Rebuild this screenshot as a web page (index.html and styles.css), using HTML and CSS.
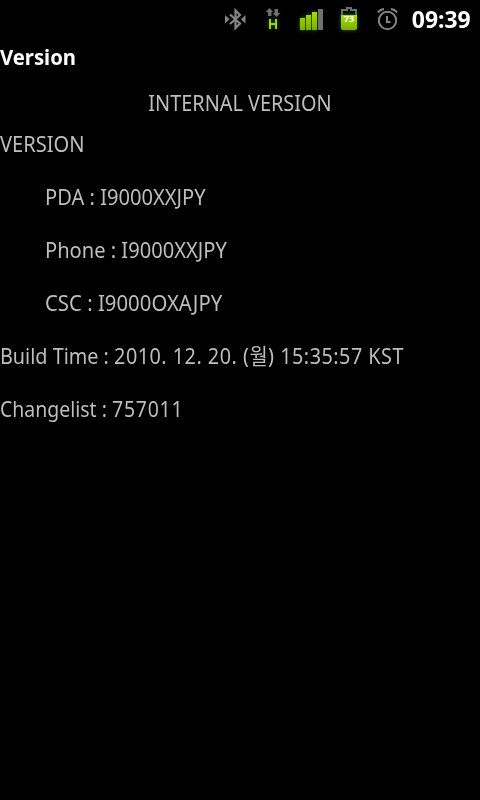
FILE: index.html
```html
<!DOCTYPE html>
<html lang="en">
<head>
  <meta charset="UTF-8">
  <meta name="viewport" content="width=device-width, initial-scale=1.0">
  <title>Version</title>
  <link rel="stylesheet" href="styles.css">
</head>
<body>
  <header class="status-bar">
    <!-- bluetooth -->
    <svg class="icon bluetooth" width="22" height="24" viewBox="0 0 22 24">
      <path d="M5 6.5L15 15.5L10.5 20V2.5L15 7L5 16" fill="none" stroke="#858585" stroke-width="2.2"/>
      <path d="M0 7L4.5 11.2L0 15.5ZM20.5 7L16 11.2L20.5 15.5Z" fill="#858585"/>
    </svg>
    <!-- data connection -->
    <svg class="icon data" width="16" height="24" viewBox="0 0 16 24">
      <path d="M3.5 0L7.2 4H5.5V8H2V4H-0.5ZM8.5 1H12V5H14.5L10.5 9L6.8 5H8.5Z" fill="#707070"/>
      <path class="glow" d="M4 11V21M10 11V21M4 16H10" fill="none" stroke="#9bdc00" stroke-width="2"/>
    </svg>
    <!-- signal -->
    <svg class="icon signal" width="23" height="22" viewBox="0 0 23 22">
      <defs>
        <linearGradient id="green" x1="0" y1="0" x2="0" y2="1">
          <stop offset="0" stop-color="#a5e000"/>
          <stop offset="1" stop-color="#79ae00"/>
        </linearGradient>
      </defs>
      <path class="glow" d="M0 9H5V21H0ZM6 6H11V21H6ZM12 3H17V21H12Z" fill="url(#green)"/>
      <path d="M18 0H23V21H18Z" fill="#707070"/>
    </svg>
    <div class="battery">
      <svg width="16" height="24" viewBox="0 0 16 24">
        <path d="M1 9V3H6V1H10V3H15V9" fill="none" stroke="#707070" stroke-width="2"/>
        <path class="glow" d="M0 8H16V21Q16 23 14 23H2Q0 23 0 21Z" fill="url(#green)"/>
      </svg>
      <span class="level">73</span>
    </div>
    <!-- alarm -->
    <svg class="icon alarm" width="22" height="24" viewBox="0 0 22 24">
      <circle cx="10.5" cy="13.5" r="8.7" fill="none" stroke="#858585" stroke-width="2"/>
      <path d="M10 9V15H13.5" fill="none" stroke="#858585" stroke-width="2"/>
      <path d="M1 5.5Q3 2.5 7 2M20 5.5Q18 2.5 14 2" fill="none" stroke="#858585" stroke-width="2"/>
    </svg>
    <span class="clock">09:39</span>
  </header>

  <h1 class="title">Version</h1>

  <main class="content">
    <p class="heading">INTERNAL VERSION</p>
    <p class="line">VERSION</p>
    <p class="line indent">PDA : I9000XXJPY</p>
    <p class="line indent">Phone : I9000XXJPY</p>
    <p class="line indent csc">CSC : I9000OXAJPY</p>
    <p class="line build">Build Time : <span class="value">2010. 12. 20. (월) 15:35:57 KST</span></p>
    <p class="line changelist">Changelist : <span class="value">757011</span></p>
  </main>
</body>
</html>
```

FILE: styles.css
```css
body {
  margin: 0;
  height: 800px;
  overflow: hidden;
  background-color: #000;
  color: #bebebe;
  font-family: "Noto Sans", "Noto Sans CJK KR", sans-serif;
}

.status-bar {
  display: flex;
  height: 38px;
  padding: 0 9px 0 225px;
}

.status-bar svg {
  display: block;
  flex: none;
  overflow: visible;
}

.glow {
  filter: drop-shadow(0 0 2px #3c6400);
}

.bluetooth {
  margin-top: 8px;
}

.data {
  margin: 8px 0 0 19px;
}

.signal {
  margin: 9px 0 0 18px;
}

.battery {
  position: relative;
  margin: 7px 0 0 18px;
}

.level {
  position: absolute;
  top: 7px;
  left: 0;
  width: 16px;
  text-align: center;
  font-size: 9px;
  line-height: 10px;
  font-weight: bold;
  color: #fff;
}

.alarm {
  margin: 7px 0 0 20px;
}

.clock {
  margin-left: auto;
  font-size: 24px;
  line-height: 38px;
  font-weight: bold;
  color: #fff;
  transform: scaleX(0.955);
  transform-origin: right;
}

.title {
  margin: 0;
  height: 38px;
  font-size: 21px;
  line-height: 38px;
  font-weight: bold;
  color: #fff;
  transform: scaleX(0.965);
  transform-origin: left;
}

.content {
  padding-top: 12px;
}

/* narrow the text a little */
.heading,
.line {
  margin: 0;
  font-size: 22px;
  line-height: 28px;
  white-space: nowrap;
  transform: scaleX(0.914);
  transform-origin: left;
}

.heading {
  margin-bottom: 13px;
  text-align: center;
  transform: scaleX(0.903);
  transform-origin: center;
}

.line {
  margin-bottom: 25px;
}

.indent {
  margin-left: 45px;
}

.csc {
  transform: scaleX(0.925);
}

.build {
  transform: scaleX(0.9);
}

.build .value {
  letter-spacing: 0.55px;
}

.changelist {
  transform: scaleX(0.885);
}

.changelist .value {
  letter-spacing: 0.85px;
}
```
